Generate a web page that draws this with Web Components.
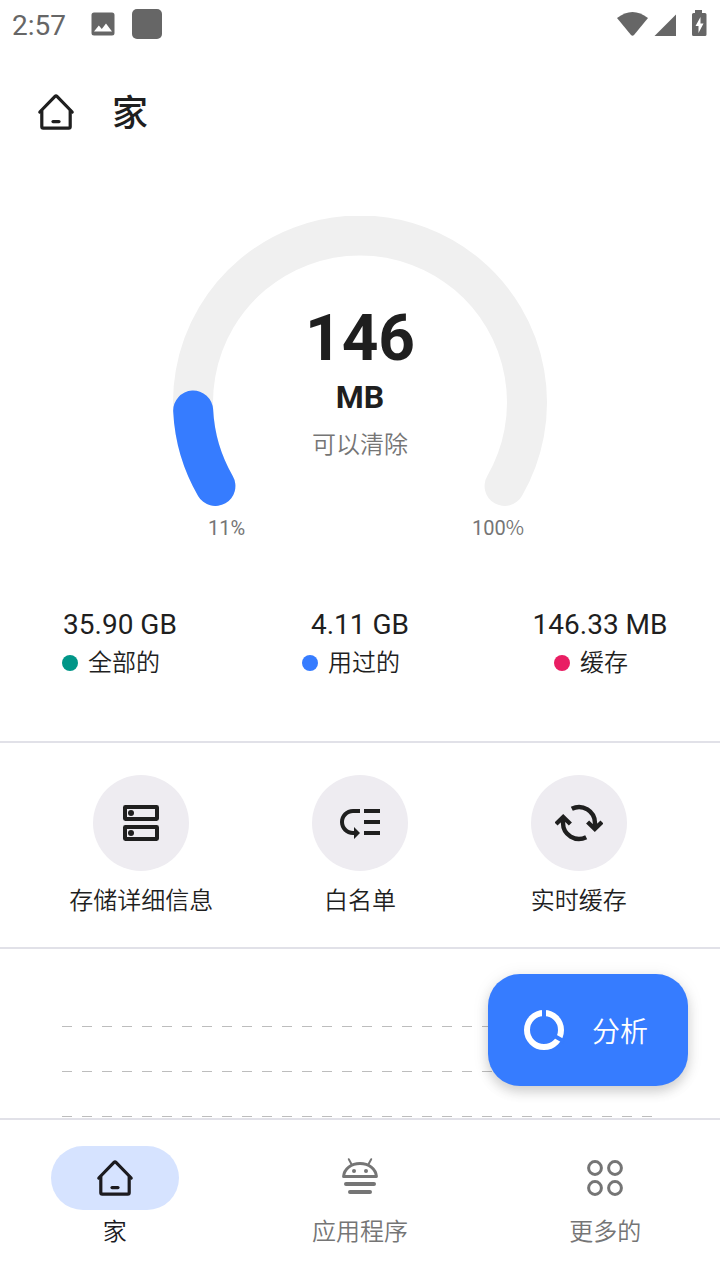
<!DOCTYPE html>
<html lang="zh-CN">
<head>
<meta charset="UTF-8">
<meta name="viewport" content="width=device-width, initial-scale=1">
<title>家</title>
<style>
    :root {
        --ink: #1f1f1f;
        --muted: #757575;
        --status: #666666;
        --blue: #367cff;
        --line: #e1e1e8;
        --cjk: "Noto Sans CJK SC", sans-serif;
    }
    body {
        margin: 0;
        background: #fff;
        color: var(--ink);
        font-family: Roboto, "Noto Sans CJK SC", sans-serif;
        font-size: 24px;
    }
</style>
</head>
<body>
<cleaner-app>
    <status-bar slot="top" time="2:57"></status-bar>
    <app-header slot="top">家</app-header>

    <storage-gauge percent="11" value="146" unit="MB">可以清除</storage-gauge>

    <stat-row>
        <stat-item value="35.90 GB" color="#009688">全部的</stat-item>
        <stat-item value="4.11 GB" color="#367cff">用过的</stat-item>
        <stat-item value="146.33 MB" color="#e91e63">缓存</stat-item>
    </stat-row>

    <action-row>
        <action-button icon="storage">存储详细信息</action-button>
        <action-button icon="list">白名单</action-button>
        <action-button icon="cached">实时缓存</action-button>
    </action-row>

    <usage-chart></usage-chart>

    <analyze-button slot="fab">分析</analyze-button>

    <bottom-nav slot="bottom">
        <nav-item icon="home" active>家</nav-item>
        <nav-item icon="apps">应用程序</nav-item>
        <nav-item icon="more">更多的</nav-item>
    </bottom-nav>
</cleaner-app>

<script>
// Icons on a 24 unit grid
const ICONS = {
    home: `<g fill="none" stroke="currentColor" stroke-width="1.6" stroke-linecap="round" stroke-linejoin="round">
        <path d="M3.9 12 11.5 4.2q.5-.5 1 0L20.1 12"/>
        <path d="M4.9 11.4V19.4q0 .7.7.7H18.4q.7 0 .7-.7V11.4"/>
        <path d="M10.5 16.8h3"/></g>`,
    storage: `<rect x="4" y="4" width="16" height="6" rx=".2" fill="none" stroke="currentColor" stroke-width="2"/>
        <rect x="4" y="14" width="16" height="6" rx=".2" fill="none" stroke="currentColor" stroke-width="2"/>
        <circle cx="7" cy="7" r="1.5" fill="currentColor"/><circle cx="7" cy="17" r="1.5" fill="currentColor"/>`,
    list: `<path fill="currentColor" d="M14 5h8v2h-8zm0 5.5h8v2h-8zm0 5.5h8v2h-8zM2 11.5C2 15.08 4.92 18 8.5 18H9v2l3-3-3-3v2h-.5C6.02 16 4 13.98 4 11.5S6.02 7 8.5 7H12V5H8.5C4.92 5 2 7.92 2 11.5z"/>`,
    cached: `<g fill="none" stroke="currentColor" stroke-width="2.2">
        <path d="M8.4 4.9A8 8 0 0 1 20 12v2.5M16.3 11.5 19.9 15l3.6-3.5"/>
        <path d="M15.6 19.1A8 8 0 0 1 4 12V9.5M7.7 12.5 4.1 9 .5 12.5"/></g>`,
    apps: `<g fill="none" stroke="currentColor" stroke-width="1.5" stroke-linecap="round" stroke-linejoin="round">
        <path d="M3.8 11.2C4.1 7.4 7.6 4.8 12 4.8s7.9 2.6 8.2 6.4z"/>
        <path d="M6.4 2.6 7.7 5M17.6 2.6 16.3 5" stroke-width="1"/>
        <path d="M5 15h14M7 19h10" stroke-width="2"/></g>
        <circle cx="9" cy="8.5" r="1" fill="currentColor"/><circle cx="15" cy="8.5" r="1" fill="currentColor"/>`,
    more: `<g fill="none" stroke="currentColor" stroke-width="1.5">
        <circle cx="7" cy="7" r="3.2"/><circle cx="17" cy="7" r="3.2"/>
        <circle cx="7" cy="17" r="3.2"/><circle cx="17" cy="17" r="3.2"/></g>`
};

function icon(name) {
    return `<svg width="48" height="48" viewBox="0 0 24 24" aria-hidden="true">${ICONS[name]}</svg>`;
}

class CleanerApp extends HTMLElement {
    constructor() {
        super();
        this.attachShadow({ mode: 'open' });
        this.shadowRoot.innerHTML = `
            <style>
                :host {
                    display: flex;
                    flex-direction: column;
                    height: 100vh;
                }
                .body {
                    position: relative;
                    flex: 1;
                    min-height: 0;
                    display: flex;
                }
                main {
                    flex: 1;
                    overflow-y: auto;
                    scrollbar-width: none;
                }
                .fab {
                    position: absolute;
                    right: 32px;
                    bottom: 32px;
                }
            </style>
            <slot name="top"></slot>
            <div class="body">
                <main><slot></slot></main>
                <div class="fab"><slot name="fab"></slot></div>
            </div>
            <slot name="bottom"></slot>
        `;
    }
}
customElements.define('cleaner-app', CleanerApp);

class StatusBar extends HTMLElement {
    constructor() {
        super();
        this.attachShadow({ mode: 'open' });
        this.shadowRoot.innerHTML = `
            <style>
                :host {
                    display: flex;
                    align-items: center;
                    justify-content: space-between;
                    height: 48px;
                    padding: 0 12px;
                    color: var(--status);
                    fill: var(--status);
                }
                div { display: flex; align-items: center; }
                time { font-size: 28px; line-height: 48px; padding-top: 4px; margin-right: 25px; }
                .app { width: 30px; height: 30px; border-radius: 5px; background: var(--status); margin-left: 17px; }
                svg { display: block; }
            </style>
            <div>
                <time>${this.getAttribute('time')}</time>
                <svg width="24" height="24" viewBox="0 0 24 24"><path fill-rule="evenodd" d="M3 .5h18Q23.5.5 23.5 3v18q0 2.5-2.5 2.5H3Q.5 23.5.5 21V3Q.5.5 3 .5zM3 19.5h18l-6-8-4.2 5.500-3-3.500z"/></svg>
                <span class="app"></span>
            </div>
            <div>
                <svg width="92" height="28" viewBox="0 0 92 28">
                    <path d="M1 8Q16.5-4 32 8L18 25q-1.5 1.6-3 0z"/>
                    <path d="M60 4.5V26H38.5z"/>
                    <path fill-rule="evenodd" d="M79 0h7v3h3q1.5 0 1.5 1.5v20q0 1.5-1.5 1.5H77.5q-1.5 0-1.5-1.5v-20Q76 3 77.5 3H79zM84.5 7l-5 9h3v7l5-9.5h-3z"/>
                </svg>
            </div>
        `;
    }
}
customElements.define('status-bar', StatusBar);

class AppHeader extends HTMLElement {
    constructor() {
        super();
        this.attachShadow({ mode: 'open' });
        this.shadowRoot.innerHTML = `
            <style>
                :host {
                    display: flex;
                    align-items: center;
                    gap: 32px;
                    height: 128px;
                    padding: 0 32px;
                }
                svg { display: block; }
                h1 { margin: 0; padding-bottom: 4px; font: 500 36px/48px var(--cjk); }
            </style>
            ${icon('home')}
            <h1><slot></slot></h1>
        `;
    }
}
customElements.define('app-header', AppHeader);

class StorageGauge extends HTMLElement {
    constructor() {
        super();
        this.attachShadow({ mode: 'open' });
        const percent = Number(this.getAttribute('percent'));
        // 240 degree dial that starts at 150 degrees
        const angle = (150 + 2.4 * percent + 1) * Math.PI / 180;
        const x = 188 + 167 * Math.cos(angle);
        const y = 187 + 167 * Math.sin(angle);

        this.shadowRoot.innerHTML = `
            <style>
                :host {
                    display: flex;
                    flex-direction: column;
                    align-items: center;
                    padding: 40px 0 63px;
                }
                .dial { display: grid; width: 376px; }
                .dial > * { grid-area: 1 / 1; }
                svg { display: block; }
                .text { text-align: center; padding-top: 85px; }
                .value { font-weight: 700; font-size: 64px; line-height: 76px; }
                .unit { font-weight: 700; font-size: 32px; line-height: 40px; }
                .note { font-size: 24px; font-weight: 350; line-height: 36px; margin-top: 10px; color: var(--muted); }
                .scale {
                    display: flex;
                    justify-content: space-between;
                    box-sizing: border-box;
                    width: 376px;
                    padding: 8px 24px 0 36px;
                    font-size: 20px;
                    line-height: 28px;
                    color: var(--muted);
                }
                .sign { font-family: var(--cjk); font-weight: 350; line-height: 20px; }
            </style>
            <div class="dial">
                <svg width="376" height="290" viewBox="0 0 376 290" fill="none" stroke-width="40" stroke-linecap="round">
                    <path stroke="#f0f0f0" d="M43.4 270A167 167 0 1 1 332.6 270"/>
                    <path stroke="#367cff" d="M43.4 270A167 167 0 0 1 ${x} ${y}"/>
                </svg>
                <div class="text">
                    <div class="value">${this.getAttribute('value')}</div>
                    <div class="unit">${this.getAttribute('unit')}</div>
                    <div class="note"><slot></slot></div>
                </div>
            </div>
            <div class="scale">
                <span>${percent}%</span>
                <span>100<span class="sign">%</span></span>
            </div>
        `;
    }
}
customElements.define('storage-gauge', StorageGauge);

class StatRow extends HTMLElement {
    constructor() {
        super();
        this.attachShadow({ mode: 'open' });
        this.shadowRoot.innerHTML = `
            <style>
                :host {
                    display: grid;
                    grid-template-columns: repeat(3, 1fr);
                    padding-bottom: 60px;
                    border-bottom: 2px solid var(--line);
                }
            </style>
            <slot></slot>
        `;
    }
}
customElements.define('stat-row', StatRow);

class StatItem extends HTMLElement {
    constructor() {
        super();
        this.attachShadow({ mode: 'open' });
        this.shadowRoot.innerHTML = `
            <style>
                :host { display: flex; flex-direction: column; align-items: center; }
                .value { font-size: 28px; line-height: 40px; }
                .label {
                    display: flex;
                    align-items: center;
                    gap: 10px;
                    padding-right: 18px;
                    font-weight: 350;
                    line-height: 36px;
                }
                .dot {
                    width: 16px;
                    height: 16px;
                    border-radius: 50%;
                    background: ${this.getAttribute('color')};
                }
            </style>
            <span class="value">${this.getAttribute('value')}</span>
            <span class="label"><i class="dot"></i><slot></slot></span>
        `;
    }
}
customElements.define('stat-item', StatItem);

class ActionRow extends HTMLElement {
    constructor() {
        super();
        this.attachShadow({ mode: 'open' });
        this.shadowRoot.innerHTML = `
            <style>
                :host {
                    display: grid;
                    grid-template-columns: repeat(3, 1fr);
                    padding: 32px 32px 28px;
                    border-bottom: 2px solid var(--line);
                }
            </style>
            <slot></slot>
        `;
    }
}
customElements.define('action-row', ActionRow);

class ActionButton extends HTMLElement {
    constructor() {
        super();
        this.attachShadow({ mode: 'open' });
        this.shadowRoot.innerHTML = `
            <style>
                :host { display: flex; justify-content: center; }
                button {
                    display: flex;
                    flex-direction: column;
                    align-items: center;
                    gap: 12px;
                    padding: 0;
                    border: 0;
                    background: none;
                    color: inherit;
                    font: inherit;
                    font-weight: 350;
                    line-height: 36px;
                    cursor: pointer;
                }
                .circle {
                    display: grid;
                    place-items: center;
                    width: 96px;
                    height: 96px;
                    border-radius: 50%;
                    background: #eeecf1;
                }
            </style>
            <button type="button">
                <span class="circle">${icon(this.getAttribute('icon'))}</span>
                <slot></slot>
            </button>
        `;
    }
}
customElements.define('action-button', ActionButton);

class UsageChart extends HTMLElement {
    constructor() {
        super();
        this.attachShadow({ mode: 'open' });
        this.shadowRoot.innerHTML = `
            <style>
                :host { display: block; padding: 77px 62px 0; }
                .grid {
                    display: grid;
                    gap: 44px;
                }
                .grid i {
                    height: 1px;
                    background: repeating-linear-gradient(90deg, #bdbdbd 0 10px, transparent 10px 20px);
                }
            </style>
            <div class="grid"><i></i><i></i><i></i></div>
        `;
    }
}
customElements.define('usage-chart', UsageChart);

class AnalyzeButton extends HTMLElement {
    constructor() {
        super();
        this.attachShadow({ mode: 'open' });
        this.shadowRoot.innerHTML = `
            <style>
                :host { display: block; }
                button {
                    display: flex;
                    align-items: center;
                    gap: 24px;
                    height: 112px;
                    padding: 0 40px 0 32px;
                    border: 0;
                    border-radius: 32px;
                    background: var(--blue);
                    color: #fff;
                    font: 350 28px/40px var(--cjk);
                    box-shadow: 0 6px 12px rgba(0,0,0,0.15), 0 2px 18px rgba(0,0,0,0.08);
                    cursor: pointer;
                }
            </style>
            <button type="button">
                <svg width="48" height="48" viewBox="0 0 24 24" fill="none">
                    <circle cx="12" cy="12" r="8.5" stroke="#fff" stroke-width="3"/>
                    <path d="M12 7V1M16 14.3l6 3.5" stroke="#367cff" stroke-width="2"/>
                </svg>
                <slot></slot>
            </button>
        `;
    }
}
customElements.define('analyze-button', AnalyzeButton);

class BottomNav extends HTMLElement {
    constructor() {
        super();
        this.attachShadow({ mode: 'open' });
        this.shadowRoot.innerHTML = `
            <style>
                :host { display: block; border-top: 2px solid var(--line); background: #fff; }
                nav {
                    display: grid;
                    grid-template-columns: repeat(3, 1fr);
                    gap: 16px;
                    padding: 26px 0 30px;
                }
            </style>
            <nav><slot></slot></nav>
        `;
    }
}
customElements.define('bottom-nav', BottomNav);

class NavItem extends HTMLElement {
    constructor() {
        super();
        this.attachShadow({ mode: 'open' });
        this.shadowRoot.innerHTML = `
            <style>
                :host { display: block; color: var(--muted); }
                :host([active]) { color: #1c1b1f; }
                a {
                    display: flex;
                    flex-direction: column;
                    align-items: center;
                    gap: 4px;
                    color: inherit;
                    font-weight: 350;
                    line-height: 36px;
                    text-decoration: none;
                }
                .pill {
                    display: grid;
                    place-items: center;
                    width: 128px;
                    height: 64px;
                    border-radius: 32px;
                }
                :host([active]) .pill { background: #d6e3ff; }
            </style>
            <a href="#${this.getAttribute('icon')}">
                <span class="pill">${icon(this.getAttribute('icon'))}</span>
                <slot></slot>
            </a>
        `;
    }
}
customElements.define('nav-item', NavItem);
</script>
</body>
</html>
